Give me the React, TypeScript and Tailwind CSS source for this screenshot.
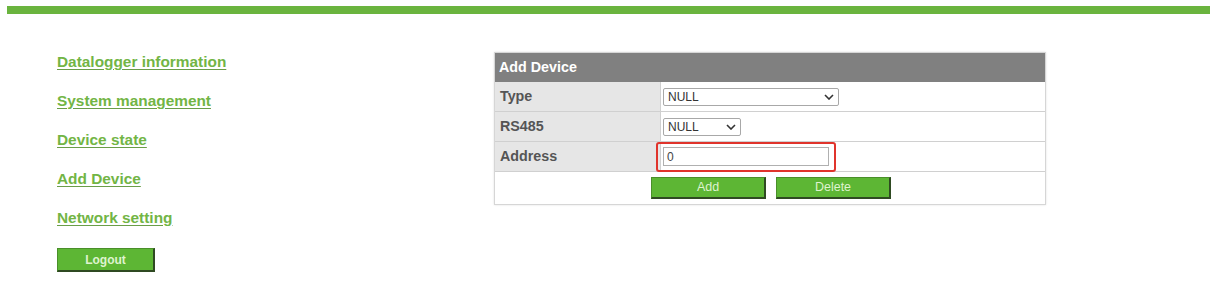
import React from 'react';

const links = ['Datalogger information', 'System management', 'Device state', 'Add Device', 'Network setting'];

const Chevron: React.FC = () => (
  <svg width="10" height="6" viewBox="0 0 10 6" className="text-[#333]">
    <path d="M1 1l4 4 4-4" fill="none" stroke="currentColor" strokeWidth="1.6" />
  </svg>
);

const GreenButton: React.FC<{ label: string; className?: string }> = ({ label, className }) => (
  <button
    className={`h-[22px] bg-[#5db634] border border-[#4a8f2a] border-r-[#2f4a22] border-b-[#2f4a22] border-r-2 border-b-2 text-[12.5px] text-[#dff3cf] leading-none ${className ?? ''}`}
  >
    {label}
  </button>
);

const App: React.FC = () => {
  return (
    <div className="w-[1217px] h-[294px] bg-white font-['Liberation_Sans',Arial,sans-serif] pt-[6px]">
      <div className="mx-[7px] h-[8px] bg-[#6ab43e]"></div>

      <div className="flex pt-[38px]">
        {/* left menu */}
        <div className="w-[494px] pl-[57px] flex flex-col gap-[19px]">
          {links.map((l) => (
            <a
              key={l}
              href="#"
              className="h-5 leading-5 text-[15.4px] font-bold text-[#72b545] underline decoration-[#6a9d48] underline-offset-2 w-fit"
            >
              {l}
            </a>
          ))}
          <GreenButton label="Logout" className="w-[98px] h-[24px] mt-px font-bold text-[12px]" />
        </div>

        {/* add device table */}
        <div className="w-[552px] h-[153px] border border-[#d6d6d6] shadow-[0_0_2px_rgba(0,0,0,0.12)] flex flex-col text-[14.3px]">
          <div className="h-[29px] bg-[#808080] text-white font-bold flex items-center px-[4px]">Add Device</div>

          <div className="h-[30px] flex border-b border-[#d0d0d0]">
            <div className="w-[165px] bg-[#e6e6e6] font-bold text-[#555] flex items-center px-[5px]">Type</div>
            <div className="flex-1 flex items-center pl-[2px] border-l border-[#d0d0d0]">
              <div className="w-[176px] h-[18px] border border-[#a8a8a8] rounded-[2px] flex items-center justify-between px-[4px] text-[12px] text-[#333]">
                <span>NULL</span>
                <Chevron />
              </div>
            </div>
          </div>

          <div className="h-[30px] flex border-b border-[#d0d0d0]">
            <div className="w-[165px] bg-[#e6e6e6] font-bold text-[#555] flex items-center px-[5px]">RS485</div>
            <div className="flex-1 flex items-center pl-[2px] border-l border-[#d0d0d0]">
              <div className="w-[78px] h-[18px] border border-[#a8a8a8] rounded-[2px] flex items-center justify-between px-[4px] text-[12px] text-[#333]">
                <span>NULL</span>
                <Chevron />
              </div>
            </div>
          </div>

          <div className="h-[30px] flex border-b border-[#d0d0d0]">
            <div className="w-[165px] bg-[#e6e6e6] font-bold text-[#555] flex items-center px-[5px]">Address</div>
            <div className="flex-1 flex items-center border-l border-[#d0d0d0]">
              <div className="-ml-[5px] w-[180px] h-[30px] border-2 border-[#e0342c] rounded-[3px] flex items-center justify-center">
                <div className="w-[166px] h-[19px] border border-[#b0b0b0] flex items-center px-[3px] text-[12px] text-[#444]">0</div>
              </div>
            </div>
          </div>

          <div className="flex-1 flex items-center gap-[10px] pl-[156px]">
            <GreenButton label="Add" className="w-[115px]" />
            <GreenButton label="Delete" className="w-[115px]" />
          </div>
        </div>
      </div>
    </div>
  );
};

export default App;
